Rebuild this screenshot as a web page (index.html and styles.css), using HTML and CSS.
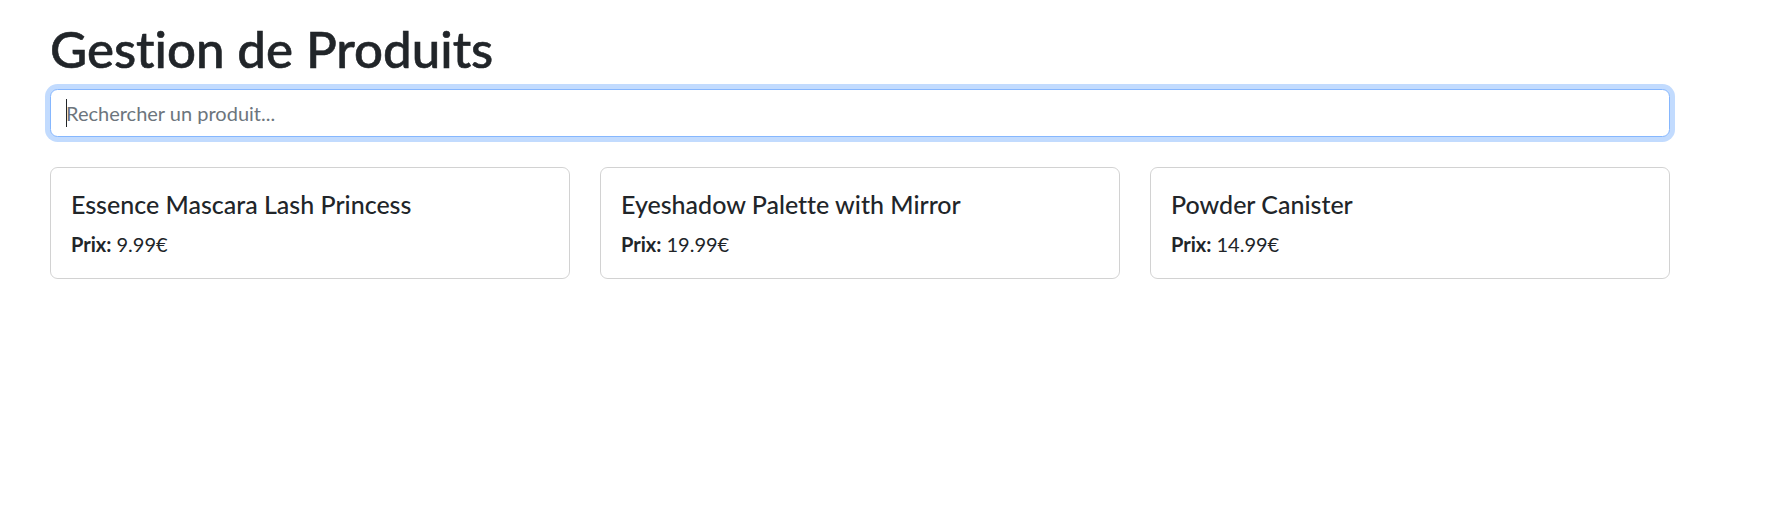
FILE: index.html
```html
<!DOCTYPE html>
<html lang="fr">
<head>
<meta charset="utf-8">
<title>Gestion de Produits</title>
<link rel="stylesheet" href="styles.css">
</head>
<body>
<div class="container">
  <h1 class="page-title">Gestion de Produits</h1>
  <div class="search-wrap">
    <input class="search" type="text" placeholder="Rechercher un produit...">
    <span class="caret"></span>
  </div>
  <div class="grid">
    <div class="card">
      <h5 class="card-title">Essence Mascara Lash Princess</h5>
      <p class="card-text"><strong>Prix:</strong> 9.99€</p>
    </div>
    <div class="card">
      <h5 class="card-title">Eyeshadow Palette with Mirror</h5>
      <p class="card-text"><strong>Prix:</strong> 19.99€</p>
    </div>
    <div class="card">
      <h5 class="card-title">Powder Canister</h5>
      <p class="card-text"><strong>Prix:</strong> 14.99€</p>
    </div>
  </div>
</div>
</body>
</html>
```

FILE: styles.css
```css
* { box-sizing: border-box; }
html, body { margin: 0; padding: 0; background: #fff; }
body {
  font-family: Lato, "Liberation Sans", sans-serif;
  font-variant-ligatures: none;
  font-feature-settings: "liga" 0, "clig" 0;
  color: #212529;
  font-size: 20px;
  line-height: 1.5;
}
.container {
  width: 1620px;
  margin-left: 50px;
  padding-top: 19px;
}
.page-title {
  margin: 0 0 10px;
  font-size: 51px;
  font-weight: 500;
  line-height: 60px;
  -webkit-text-stroke: 0.6px #212529;
}
.search-wrap { position: relative; }
.search {
  display: block;
  width: 100%;
  height: 47.5px;
  padding: 7.5px 15px;
  font-family: inherit;
  font-size: 20px;
  color: #212529;
  background: #fff;
  border: 1px solid #86b7fe;
  border-radius: 7.5px;
  box-shadow: 0 0 0 5px rgba(13, 110, 253, 0.25);
  outline: none;
}
.search::placeholder { color: #6c757d; opacity: 1; }
.caret {
  position: absolute;
  left: 16px;
  top: 10px;
  width: 1px;
  height: 28px;
  background: #212529;
}
.grid {
  margin-top: 30px;
  display: grid;
  grid-template-columns: repeat(3, 1fr);
  gap: 30px;
}
.card {
  border: 1px solid rgba(0, 0, 0, 0.175);
  border-radius: 7.5px;
  padding: 20px 20px 19px;
}
.card-title {
  margin: 1px 0 10px;
  font-size: 25px;
  font-weight: 500;
  line-height: 1.2;
}
.card-text { margin: 0; }
.card-text strong { font-weight: 700; }
```
